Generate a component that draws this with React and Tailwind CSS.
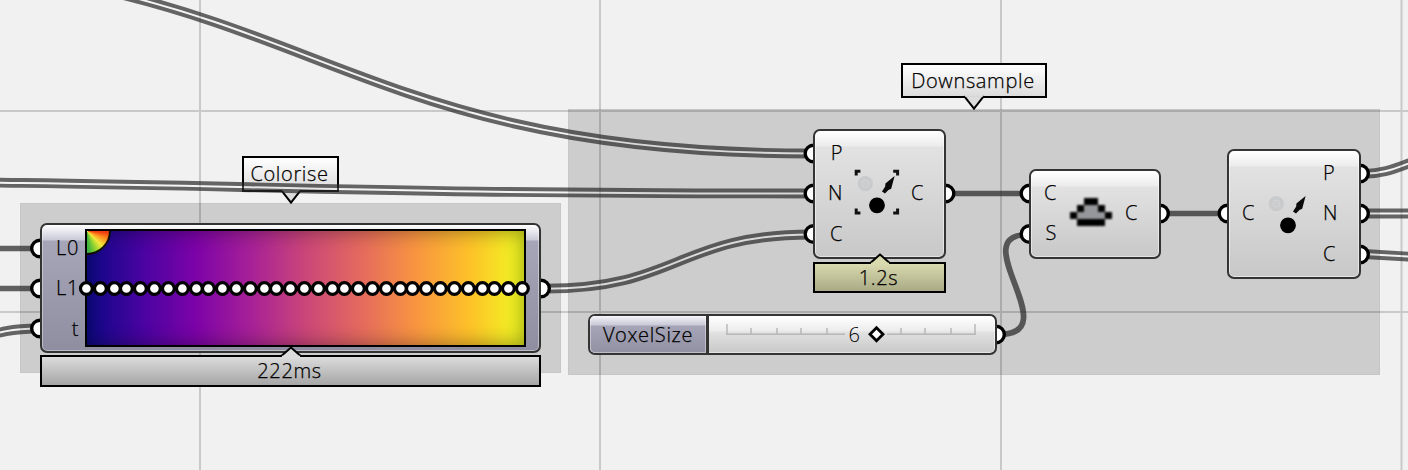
import React from 'react';

const knots = [86, 100, 114, 126, 140, 154, 168, 182, 196, 208, 222, 236, 250, 264, 276, 290, 304, 318, 332, 344, 358, 372, 386, 400, 412, 426, 440, 454, 468, 482, 494, 508, 522];

const doubleWires = [
  'M-190 -39 C310 -39 310 153.5 812 153.5',
  'M-310 181 C250 181 250 193.5 812 193.5',
  'M545 288.7 C678 288.7 678 234.5 812 234.5',
  'M-30 342 C0 331 14 328.5 38 328.5',
  'M1364 173.8 C1384 173.8 1396 168 1414 161.5',
  'M1364 213.5 L1412 213.5',
  'M1364 254 L1412 256.8',
];
const singleWires = [
  'M-5 248.5 L38 248.5',
  'M-5 288.5 L38 288.5',
  'M950 193.5 L1026 193.5',
  'M1164 213.5 L1224 213.5',
  'M999 334.5 C1068 334.5 963 234.5 1028 234.5',
];
const ports = [
  [40, 248.5], [40, 288.5], [40, 328.5], [541, 288.5],
  [813.5, 153.5], [813.5, 193.5], [813.5, 234], [945.5, 193.5],
  [1029.5, 193.5], [1029.5, 234], [1160, 213.5],
  [1227.5, 213.5], [1360, 173.5], [1360, 213.5], [1360, 254.5],
  [996, 334.5],
];

function Wires() {
  return (
    <svg className="absolute inset-0" width="1408" height="470" fill="none">
      <defs>
        {doubleWires.map((d, i) => (
          <mask key={i} id={`gap${i}`} maskUnits="userSpaceOnUse" x="-400" y="-100" width="2000" height="700">
            <rect x="-400" y="-100" width="2000" height="700" fill="#fff" />
            <path d={d} stroke="#000" strokeWidth="2" />
          </mask>
        ))}
      </defs>
      {doubleWires.map((d, i) => (
        <g key={i}>
          <path d={d} stroke="#fff" strokeOpacity=".25" strokeWidth="2" />
          <path d={d} stroke="#282828" strokeOpacity=".7" strokeWidth="9.8" mask={`url(#gap${i})`} />
        </g>
      ))}
      {singleWires.map((d) => <path key={d} d={d} stroke="#282828" strokeOpacity=".72" strokeWidth="5.7" />)}
      {ports.map(([x, y]) => <circle key={`${x}-${y}`} cx={x} cy={y} r="8.3" fill="#fff" stroke="#000" strokeWidth="3.4" />)}
    </svg>
  );
}

function Callout({ className, children }) {
  return (
    <div className={`absolute flex items-center justify-center border-2 border-black bg-linear-to-b from-white to-[#dcdcdc] ${className}`}>
      {children}
      <svg className="absolute -bottom-[15px] left-1/2 -translate-x-1/2" width="24" height="16">
        <path d="M2.2 1.2 L12 13.6 L21.8 1.2" fill="#dcdcdc" stroke="#000" strokeWidth="2" />
        <path d="M3.2 .5 H20.8" stroke="#dcdcdc" strokeWidth="2.8" />
      </svg>
    </div>
  );
}

function Timing({ className, tip, children }) {
  return (
    <div className={`absolute flex items-center justify-center border-2 border-black bg-linear-to-b ${className}`}>
      {children}
      <svg className="absolute -top-[11px] left-1/2 -translate-x-1/2" width="24" height="13">
        <path d="M2 10.2 L12 1.5 L22 10.2" fill={tip} stroke="#000" strokeWidth="2" />
        <path d="M3 11 H21" stroke={tip} strokeWidth="2.6" />
      </svg>
    </div>
  );
}

function Node({ className, children }) {
  return (
    <div className={`absolute flex rounded-[7px] border-2 border-[#343434] bg-[linear-gradient(180deg,#fff_0,#ececec_15px,#e2e2e2_16px,#c8c8c8_100%)] shadow-[inset_0_0_0_1px_rgba(255,255,255,0.5)] ${className}`}>
      {children}
    </div>
  );
}

function Labels({ items, className }) {
  return (
    <div className={`flex flex-col ${className}`}>
      {items.map((t) => <span key={t} className="h-[40.4px] leading-[40.4px]">{t}</span>)}
    </div>
  );
}

function PointIcon({ framed }) {
  return (
    <svg className="blur-[0.5px]" width="48" height="48" viewBox="0 0 48 48">
      {framed && (
        <path d="M3.2 6.6 V2.2 H7.4 M40.2 2.2 H44.6 V6.6 M44.6 39.6 V44 H40.2 M7.4 44 H3.2 V39.6" fill="none" stroke="#111" strokeWidth="3" />
      )}
      <circle cx="12.3" cy="14.7" r="7.6" fill="#c9cacc" />
      <rect x="9.2" y="11.4" width="6.2" height="6.6" rx="1.6" fill="#cbccce" stroke="#d4d5d7" strokeWidth="1" />
      <path d="M41.6 7 L32.4 14.6 L32.2 17.4 L29 22.4 L32 24.4 L35.4 21 L38.2 19.8 Z" fill="#0a0a0a" />
      <circle cx="24" cy="36.3" r="7.9" fill="#000" />
    </svg>
  );
}

function CloudIcon() {
  return (
    <svg className="blur-[0.8px]" width="42" height="28" viewBox="0 0 42 28">
      <path d="M14 7 H28 V14 H35 V21 H7 V14 H14 Z" fill="#96979a" />
      <path d="M14 0 H28 V7 H35 V14 H42 V21 H35 V28 H7 V21 H0 V14 H7 V7 H14 Z M14 7 V14 H7 V21 H35 V14 H28 V7 Z" fill="#000" fillRule="evenodd" />
    </svg>
  );
}

export default function App() {
  return (
    <main className="relative h-[470px] w-[1408px] overflow-hidden bg-[#f1f1f1] font-['Open_Sans','Noto_Sans',sans-serif] text-[20px] leading-none font-light tracking-[0.65px] text-black [-webkit-text-stroke:0.25px_#000]">
      <svg className="absolute inset-0" width="1408" height="470">
        <path d="M200 0 V470 M600 0 V470 M1001 0 V470 M1401.5 0 V470 M0 111 H1408 M0 312 H1408" stroke="#c9c9c9" strokeWidth="2" />
      </svg>
      <div className="absolute top-[203px] left-[20px] h-[170px] w-[541px] border border-black/3 bg-black/15" />
      <div className="absolute top-[109px] left-[568px] h-[266px] w-[812px] border border-black/3 bg-black/15" />

      <Callout className="top-[156px] left-[242px] h-[36px] w-[97px] pr-[2px]">Colorise</Callout>
      <Callout className="top-[63px] left-[901px] h-[35px] w-[146px] pr-[2px]">Downsample</Callout>

      <Wires />

      <div className="absolute top-[223px] left-[40px] flex h-[130px] w-[501px] rounded-[7px] border-2 border-[#333] bg-[linear-gradient(180deg,#fff_0,#c9c9d8_15px,#a6a6b8_16px,#8e8ea0_100%)] shadow-[inset_0_0_0_1px_rgba(255,255,255,0.4)]">
        <Labels items={['L0', 'L1', 't']} className="w-[37px] pt-[3px] text-right" />
        <div className="relative mt-[4px] ml-[6px] h-[118px] w-[441px] overflow-hidden border-2 border-black bg-[linear-gradient(90deg,#0d0887,#4b03a1_13%,#7d03a8_25%,#a82296_38%,#cb4679_50%,#e56b5d_63%,#f89441_75%,#fdc328_88%,#f3ee24_97%,#f0f921)]">
          <div className="absolute inset-0 shadow-[inset_0_0_20px_rgba(0,0,0,0.4)]" />
          <div className="absolute -top-[24px] -left-[24px] size-[48px] rounded-full border-2 border-black/90 bg-[conic-gradient(#f00_0deg,#f04010_95deg,#ff9020_112deg,#f0e83c_135deg,#9fd62e_152deg,#3fb440_175deg,#129a40)]" />
        </div>
      </div>
      <svg className="absolute inset-0" width="1408" height="470">
        {knots.map((x) => <circle key={x} cx={x + 0.4} cy="288.5" r="5.9" fill="#fff" stroke="#000" strokeWidth="3.2" />)}
      </svg>
      <Timing className="top-[355px] left-[40px] h-[32px] w-[501px] pr-[2px] from-[#dcdcdc] to-[#a6a6a6]" tip="#dcdcdc">222ms</Timing>

      <Node className="top-[129px] left-[813px] h-[130px] w-[133px]">
        <Labels items={['P', 'N', 'C']} className="w-[28px] pt-[2px] text-right" />
        <div className="ml-[10px] flex items-center pb-[2px]"><PointIcon framed /></div>
        <Labels items={['C']} className="ml-[10px] pt-[42px]" />
      </Node>
      <Timing className="top-[262px] left-[813px] h-[31px] w-[133px] pr-[2px] from-[#dadab0] to-[#a9a985]" tip="#dadab0">1.2s</Timing>

      <Node className="top-[169px] left-[1029px] h-[90px] w-[132px]">
        <Labels items={['C', 'S']} className="w-[26px] pt-[2px] text-right" />
        <div className="ml-[13px] flex items-center pb-[4px]"><CloudIcon /></div>
        <Labels items={['C']} className="ml-[13px] pt-[22px]" />
      </Node>

      <Node className="top-[149px] left-[1227px] h-[130px] w-[134px]">
        <Labels items={['C']} className="ml-[13px] w-[14px] pt-[42px]" />
        <div className="ml-[8px] flex items-center pb-[2px]"><PointIcon /></div>
        <Labels items={['P', 'N', 'C']} className="ml-[11px] pt-[2px]" />
      </Node>

      <Node className="top-[314px] left-[588px] h-[41px] w-[409px]">
        <div className="flex w-[119px] items-center justify-center rounded-l-[5px] border-r-[3px] border-[#343434] bg-[linear-gradient(180deg,#f4f4f8_0,#c9c9d8_9px,#a5a5b7_10px,#9191a3_100%)] shadow-[inset_0_0_0_1px_rgba(255,255,255,0.4)]">VoxelSize</div>
        <svg width="285" height="37" viewBox="-1 0 285 37">
          <path d="M17 8 V18.5 M41 12 V18 M67 12 V18 M91 12 V18 M117 12 V18 M191 12 V18 M215 12 V18 M241 12 V18 M265 8 V18.5 M16 18.2 H135 M177 18.2 H266" fill="none" stroke="#b6b6b6" strokeWidth="1.4" />
          <text x="138.5" y="25.7" fontSize="20">6</text>
          <path d="M166.5 11.8 L173 18.3 L166.5 24.8 L160 18.3 Z" fill="#fff" stroke="#000" strokeWidth="2.8" />
        </svg>
      </Node>
    </main>
  );
}
